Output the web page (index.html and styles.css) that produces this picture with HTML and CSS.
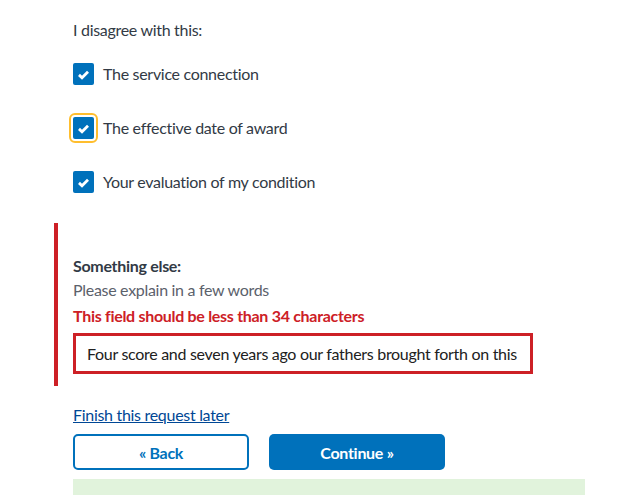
FILE: index.html
```html
<!DOCTYPE html>
<html lang="en">
<head>
    <meta charset="UTF-8">
    <title>Disagreement form</title>
    <link rel="stylesheet" href="styles.css">
</head>
<body>
    <div class="form">
        <p class="legend">I disagree with this:</p>

        <label class="check">
            <span class="box"><svg viewBox="0 0 16 16" width="15" height="15"><path d="M3.2 8.4l3.2 3 6.4-6.4" fill="none" stroke="#fff" stroke-width="3"/></svg></span>
            The service connection
        </label>
        <label class="check focused">
            <span class="box"><svg viewBox="0 0 16 16" width="15" height="15"><path d="M3.2 8.4l3.2 3 6.4-6.4" fill="none" stroke="#fff" stroke-width="3"/></svg></span>
            The effective date of award
        </label>
        <label class="check">
            <span class="box"><svg viewBox="0 0 16 16" width="15" height="15"><path d="M3.2 8.4l3.2 3 6.4-6.4" fill="none" stroke="#fff" stroke-width="3"/></svg></span>
            Your evaluation of my condition
        </label>

        <div class="error-block">
            <div class="label">Something else:</div>
            <div class="hint">Please explain in a few words</div>
            <div class="error-msg">This field should be less than 34 characters</div>
            <input class="text-input" type="text" value="Four score and seven years ago our fathers brought forth on this continent">
        </div>

        <a href="#" class="later">Finish this request later</a>

        <div class="buttons">
            <button class="btn btn-outline">« Back</button>
            <button class="btn btn-primary">Continue »</button>
        </div>

        <div class="notice"></div>
    </div>
</body>
</html>
```

FILE: styles.css
```css
body {
    margin: 0;
    font-family: Lato, "Liberation Sans", sans-serif;
    font-size: 16px;
    letter-spacing: -0.3px;
    color: #323a45;
    background: #fff;
    overflow: hidden;
    height: 495px;
}
.form {
    padding: 18px 45px 0 73px;
}
.legend {
    margin: 0;
    line-height: 24px;
}
.check {
    display: flex;
    align-items: center;
    gap: 9px;
    height: 22px;
    margin-top: 21px;
    line-height: 22px;
}
.check + .check {
    margin-top: 32px;
}
.box {
    width: 21px;
    height: 22px;
    border-radius: 2px;
    background: #0071bb;
    display: flex;
    align-items: center;
    justify-content: center;
    flex-shrink: 0;
}
.focused .box {
    outline: 2px solid #ffbe2e;
    outline-offset: 2px;
}
.error-block {
    margin: 30px 0 0 -19px;
    padding: 31px 0 12px 15px;
    border-left: 4px solid #cd2026;
}
.label {
    font-weight: bold;
    line-height: 24px;
}
.hint {
    color: #5b616b;
    line-height: 24px;
}
.error-msg {
    color: #cd2026;
    font-weight: bold;
    line-height: 24px;
    margin-top: 2px;
}
.text-input {
    display: block;
    box-sizing: border-box;
    width: 460px;
    height: 41px;
    margin-top: 5px;
    padding: 0 11px;
    border: 3px solid #cd2026;
    font: inherit;
    letter-spacing: inherit;
    color: #212121;
}
.later {
    display: inline-block;
    margin-top: 17px;
    color: #004795;
    line-height: 24px;
}
.buttons {
    display: flex;
    gap: 20px;
    margin-top: 7px;
}
.btn {
    width: 176px;
    height: 36px;
    border-radius: 5px;
    font: inherit;
    letter-spacing: inherit;
    font-weight: bold;
}
.btn-outline {
    background: #fff;
    color: #0071bb;
    border: 2px solid #0071bb;
}
.btn-primary {
    background: #0071bb;
    color: #fff;
    border: none;
}
.notice {
    margin-top: 9px;
    height: 40px;
    background: #e1f3dc;
}
```
